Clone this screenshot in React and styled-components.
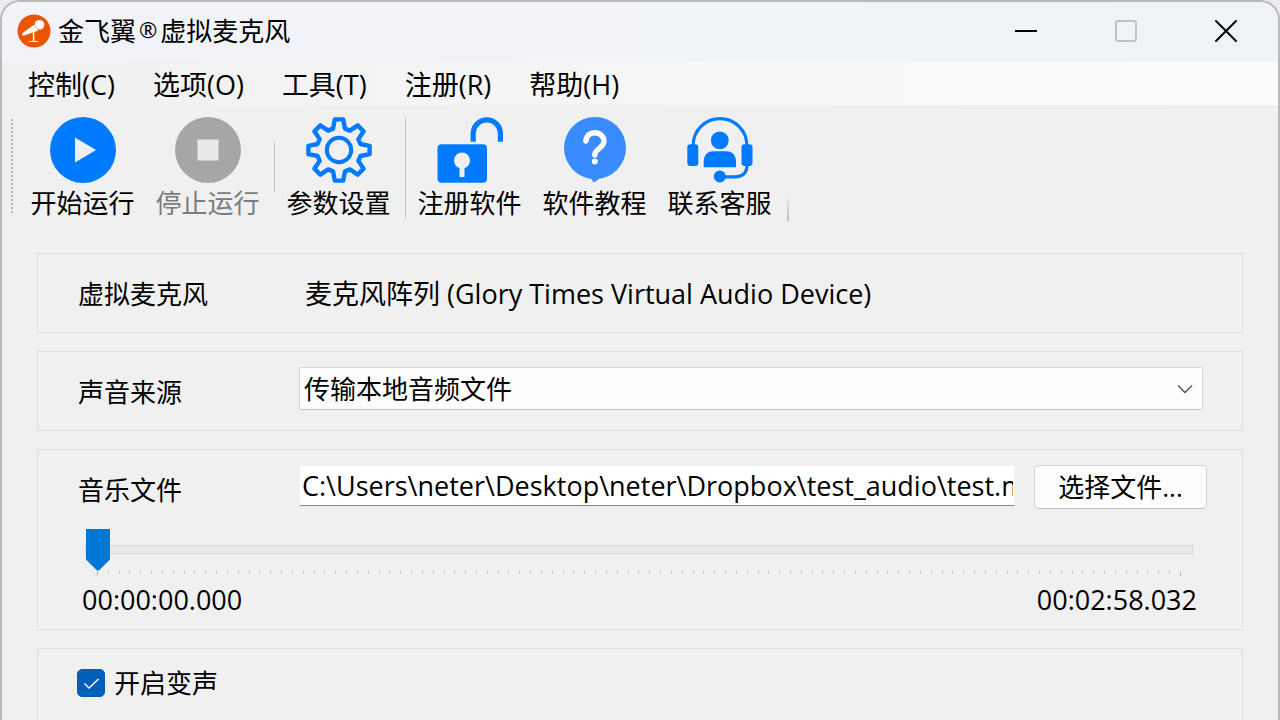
import React, { useState } from 'react'
import styled, { createGlobalStyle } from 'styled-components';

const GlobalStyle = createGlobalStyle`
    * {
        box-sizing: border-box;
    }
    body {
        margin: 0;
        background-color: #ececec;
        color: #000;
        font-family: "Open Sans", "Noto Sans CJK SC", sans-serif;
        font-size: 26px;
        line-height: 36px;
    }
    button, input, select {
        font: inherit;
        color: inherit;
    }
`;
const Window = styled.div`
    min-height: 100vh;
    display: flex;
    flex-direction: column;
    overflow: hidden;
    border: 2px solid #b9b9b9;
    border-bottom: none;
    border-radius: 20px 20px 0 0;
    background-color: #f0f0f0;
`;
const TitleBar = styled.header`
    height: 60px;
    display: flex;
    align-items: center;
    padding: 0 2px 2px 15px;
    background-image: linear-gradient(to right, #f2f3f9, #eff3f7);
`;
const Title = styled.h1`
    flex: 1;
    margin: 0 0 0 7px;
    font-size: 26px;
    font-weight: 400;
`;
const Registered = styled.span`
    margin: 0 3px;
    font-size: 22px;
    line-height: 20px;
    vertical-align: 3px;
`;
const CaptionButton = styled.button`
    width: 100px;
    height: 100%;
    display: flex;
    align-items: center;
    justify-content: center;
    padding: 0;
    border: none;
    background: none;
`;
const MenuBar = styled.nav`
    height: 43px;
    display: flex;
    align-items: center;
    gap: 38px;
    padding: 2px 0 0 26px;
    background-image: linear-gradient(to right, #f0f0f0, #fcfcfc);
`;
const MenuButton = styled.button`
    padding: 0;
    border: none;
    background: none;
    font-size: 27px;
    white-space: nowrap;
`;
const ToolBar = styled.div`
    display: flex;
    padding: 12px 0 5px 9px;
`;
const Grip = styled.div`
    width: 2px;
    height: 96px;
    margin: 2px 7px 0 0;
    background-image: repeating-linear-gradient(#b4b4b4 0 2px, transparent 2px 4px);
`;
const ToolButton = styled.button`
    width: 125px;
    display: flex;
    flex-direction: column;
    align-items: center;
    gap: 2px;
    padding: 0;
    border: none;
    background: none;
    white-space: nowrap;

    &:disabled {
        color: #7c7c7c;
    }
`;
const Separator = styled.div`
    width: 1px;
    height: ${props => props.$short ? '50px' : '102px'};
    margin: ${props => props.$short ? '25px' : '0'} 1px 0 4px;
    background-color: #c4c4c4;
`;
const ToolBarEnd = styled.div`
    width: 2px;
    margin-left: 5px;
    background-image: linear-gradient(#f0f0f0, #eee 75%, #bbb);
`;
const Content = styled.main`
    flex: 1;
    display: flex;
    flex-direction: column;
    gap: 18px;
    padding: 27px 35px 0;
`;
const Group = styled.section`
    padding: 15px 39px 20px 40px;
    border: 1px solid #dedede;
`;
const FileGroup = styled(Group)`
    padding-bottom: 11px;
`;
const LastGroup = styled(Group)`
    flex: 1;
    border-bottom: none;
    padding: 16px 39px;
`;
const Row = styled.div`
    display: grid;
    grid-template-columns: 221px 1fr;
    align-items: center;
    min-height: 43px;
`;
const Label = styled.label`
    padding-top: 6px;
`;
const Device = styled.output`
    padding: 7px 0 0 6px;
    font-size: 27px;
`;
const SelectBox = styled.div`
    display: grid;
    align-items: center;

    > * {
        grid-area: 1 / 1;
    }
    svg {
        justify-self: end;
        margin-right: 10px;
        pointer-events: none;
    }
`;
const Select = styled.select`
    appearance: none;
    width: 100%;
    height: 43px;
    padding: 0 30px 0 4px;
    border: 1px solid #d6d6d6;
    border-bottom-color: #c2c2c2;
    border-radius: 2px;
    background-color: #fdfdfd;
`;
const FileRow = styled.div`
    display: flex;
    gap: 19px;
    margin-right: -4px;
`;
const PathInput = styled.input`
    flex: 1;
    min-width: 0;
    height: 41px;
    padding: 0 1px 0 2px;
    border: 1px solid #f4f4f4;
    border-bottom-color: #868686;
    background-color: #fff;
    font-size: 27px;
`;
const FileButton = styled.button`
    width: 173px;
    height: 44px;
    padding: 0;
    border: 1px solid #d4d4d4;
    border-bottom-color: #bebebe;
    border-radius: 5px;
    background-color: #fdfdfd;
`;
const Seek = styled.div`
    margin: 19px 10px 0 7px;
`;
const Slider = styled.input`
    appearance: none;
    display: block;
    width: 100%;
    height: 42px;
    margin: 0;
    background: none;

    &::-webkit-slider-runnable-track {
        height: 9px;
        border: 1px solid #d6d6d6;
        background-color: #e7eaea;
    }
    &::-webkit-slider-thumb {
        appearance: none;
        width: 24px;
        height: 42px;
        margin-top: -17px;
        background-color: #0078d7;
        clip-path: polygon(0 0, 100% 0, 100% 74%, 54% 100%, 46% 100%, 0 74%);
    }
`;
const Ticks = styled.div`
    display: flex;
    justify-content: space-between;
    padding: 1px 11px 0 12px;
`;
const Tick = styled.span`
    width: 1px;
    height: 3px;
    background-color: #bdbdbd;

    &:first-child, &:last-child {
        height: 5px;
    }
`;
const Times = styled.div`
    display: flex;
    justify-content: space-between;
    margin: 6px 6px 0 4px;
    font-size: 27px;
`;
const CheckLabel = styled.label`
    display: inline-flex;
    align-items: center;
    gap: 9px;
`;
const CheckMark = styled.span`
    display: grid;

    > * {
        grid-area: 1 / 1;
    }
    svg {
        pointer-events: none;
    }
`;
const Checkbox = styled.input`
    appearance: none;
    width: 28px;
    height: 28px;
    margin: 0;
    border: 1px solid #005fb8;
    border-radius: 5px;
    background-color: #fff;

    &:checked {
        background-color: #005fb8;
    }
`;

const BLUE = '#007bff';

const LogoIcon = () => (
  <svg width="34" height="34" viewBox="0 0 34 34" aria-hidden="true">
    <circle cx="17" cy="17" r="16.5" fill="#ea5504" />
    <path d="M17.4 10.4 L5.6 19 Q4.8 20 5.4 21 Q6 21.8 7.2 21.4 L21.4 16.4 Z" fill="#fff" />
    <circle cx="22.4" cy="10.8" r="4.9" fill="#fff" />
    <path d="M17.6 9.4 Q18 14.6 23 16" fill="none" stroke="#ea5504" strokeWidth="0.5" />
    <path d="M16.6 18 V27.4" stroke="#fff" strokeWidth="1.4" />
    <path d="M10.6 28 Q16.6 25.6 22.6 28 Z" fill="#fff" />
  </svg>
)

const PlayIcon = () => (
  <svg width="66" height="66" viewBox="0 0 66 66" aria-hidden="true">
    <circle cx="33" cy="33" r="33" fill={BLUE} />
    <path d="M25 20.5 L46 33 L25 45.5 Z" fill="#f0f0f0" />
  </svg>
)

const StopIcon = () => (
  <svg width="66" height="66" viewBox="0 0 66 66" aria-hidden="true">
    <circle cx="33" cy="33" r="33" fill="#a6a6a6" />
    <rect x="22.5" y="22.5" width="21" height="21" fill="#e8e8e8" />
  </svg>
)

// one tooth turned eight times round the centre
const gearPoints = Array.from({ length: 8 }, (_, i) => {
  const a = i * Math.PI / 4;
  return [[-6, -21.4], [-4.2, -30.6], [4.2, -30.6], [6, -21.4]].map(([x, y]) => {
    const px = 33 + x * Math.cos(a) - y * Math.sin(a);
    const py = 33 + x * Math.sin(a) + y * Math.cos(a);
    return `${px.toFixed(2)},${py.toFixed(2)}`;
  }).join(' ');
}).join(' ');

const GearIcon = () => (
  <svg width="66" height="66" viewBox="0 0 66 66" fill="none" stroke={BLUE} aria-hidden="true">
    <polygon points={gearPoints} strokeWidth="4.4" strokeLinejoin="round" />
    <circle cx="33" cy="33" r="12.2" strokeWidth="4" />
  </svg>
)

const UnlockIcon = () => (
  <svg width="66" height="66" viewBox="0 0 66 66" aria-hidden="true">
    <rect x="0.5" y="27.3" width="49.5" height="38.4" rx="4" fill={BLUE} />
    <circle cx="25" cy="43.5" r="8" fill="#f0f0f0" />
    <rect x="22.5" y="48" width="5" height="12" fill="#f0f0f0" />
    <path d="M36.2 24.8 V16.6 A13.6 13.8 0 0 1 63.4 16.6 V24.8" fill="none" stroke={BLUE} strokeWidth="5.2" />
  </svg>
)

const HelpIcon = () => (
  <svg width="66" height="66" viewBox="0 0 66 66" aria-hidden="true">
    <circle cx="33" cy="31" r="31" fill="#3a8bff" />
    <path d="M28 60 L31.5 65.6 Q36 63.6 38.5 60 Z" fill="#3a8bff" />
    <path d="M23.8 24 C24.6 18.6 28 15.8 32.8 15.8 C38.2 15.8 42 19.4 42 24 C42 31 32.8 31.6 32.8 38" fill="none" stroke="#fff" strokeWidth="5.4" strokeLinecap="round" />
    <circle cx="32.8" cy="44.6" r="3" fill="#fff" />
  </svg>
)

const SupportIcon = () => (
  <svg width="66" height="66" viewBox="0 0 66 66" fill={BLUE} aria-hidden="true">
    <path d="M6.2 28 A26.8 26.4 0 0 1 59.8 28" fill="none" stroke={BLUE} strokeWidth="3.2" />
    <rect x="0.3" y="27.3" width="11" height="21.6" rx="3" />
    <rect x="54.5" y="27.3" width="11" height="21.6" rx="3" />
    <circle cx="32.8" cy="23.4" r="8.9" />
    <path d="M16.7 50.2 V45 C16.7 38.5 20 34.2 26 34.2 H39.6 C45.6 34.2 49 38.5 49 45 V50.2 Z" />
    <circle cx="32.8" cy="59.6" r="6" />
    <path d="M36 59.8 H47.5 Q60 59.8 60 48" fill="none" stroke={BLUE} strokeWidth="3.2" />
  </svg>
)

const menus = ['控制(C)', '选项(O)', '工具(T)', '注册(R)', '帮助(H)'];

const App = () => {
  const [position, setPosition] = useState(0);
  const [changer, setChanger] = useState(true);

  return (
    <Window>
      <GlobalStyle />
      <TitleBar>
        <LogoIcon />
        <Title>金飞翼<Registered>®</Registered>虚拟麦克风</Title>
        <CaptionButton aria-label="最小化">
          <svg width="24" height="24" viewBox="0 0 24 24" stroke="#000" strokeWidth="2">
            <path d="M1 12 H23" />
          </svg>
        </CaptionButton>
        <CaptionButton aria-label="最大化" disabled>
          <svg width="24" height="24" viewBox="0 0 24 24" fill="none" stroke="#bfc3c6" strokeWidth="2">
            <rect x="2" y="2" width="20" height="20" rx="2" />
          </svg>
        </CaptionButton>
        <CaptionButton aria-label="关闭">
          <svg width="24" height="24" viewBox="0 0 24 24" stroke="#000" strokeWidth="2" strokeLinecap="round">
            <path d="M2 2 L22 22 M22 2 L2 22" />
          </svg>
        </CaptionButton>
      </TitleBar>
      <MenuBar>
        {menus.map(menu => <MenuButton key={menu}>{menu}</MenuButton>)}
      </MenuBar>
      <ToolBar>
        <Grip />
        <ToolButton><PlayIcon />开始运行</ToolButton>
        <ToolButton disabled><StopIcon />停止运行</ToolButton>
        <Separator $short />
        <ToolButton><GearIcon />参数设置</ToolButton>
        <Separator />
        <ToolButton><UnlockIcon />注册软件</ToolButton>
        <ToolButton><HelpIcon />软件教程</ToolButton>
        <ToolButton><SupportIcon />联系客服</ToolButton>
        <ToolBarEnd />
      </ToolBar>
      <Content>
        <Group>
          <Row>
            <Label htmlFor="device">虚拟麦克风</Label>
            <Device id="device">麦克风阵列 (Glory Times Virtual Audio Device)</Device>
          </Row>
        </Group>
        <Group>
          <Row>
            <Label htmlFor="source">声音来源</Label>
            <SelectBox>
              <Select id="source">
                <option>传输本地音频文件</option>
              </Select>
              <svg width="16" height="16" viewBox="0 0 16 16" fill="none" stroke="#555" strokeWidth="1.4">
                <path d="M1 4.5 L8 11.5 L15 4.5" />
              </svg>
            </SelectBox>
          </Row>
        </Group>
        <FileGroup>
          <Row>
            <Label htmlFor="file">音乐文件</Label>
            <FileRow>
              <PathInput id="file" type="text" defaultValue="C:\Users\neter\Desktop\neter\Dropbox\test_audio\test.mp3" />
              <FileButton>选择文件...</FileButton>
            </FileRow>
          </Row>
          <Seek>
            <Slider
              type="range"
              aria-label="播放进度"
              min="0"
              max="100"
              value={position}
              onChange={e => setPosition(Number(e.target.value))}
            />
            <Ticks>
              {Array.from({ length: 101 }, (_, i) => <Tick key={i} />)}
            </Ticks>
          </Seek>
          <Times>
            <span>00:00:00.000</span>
            <span>00:02:58.032</span>
          </Times>
        </FileGroup>
        <LastGroup>
          <CheckLabel>
            <CheckMark>
              <Checkbox type="checkbox" checked={changer} onChange={e => setChanger(e.target.checked)} />
              {changer && (
                <svg width="28" height="28" viewBox="0 0 28 28" fill="none" stroke="#fff" strokeWidth="1.4">
                  <path d="M7.5 14.5 L12 19 L21.5 10" />
                </svg>
              )}
            </CheckMark>
            开启变声
          </CheckLabel>
        </LastGroup>
      </Content>
    </Window>
  )
}

export default App
